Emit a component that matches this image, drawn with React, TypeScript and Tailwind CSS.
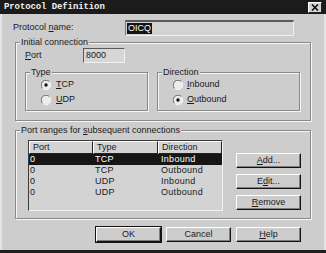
import React from "react";

const Radio = ({ checked }: { checked?: boolean }) => (
  <svg width="10" height="10" viewBox="0 0 10 10" className="shrink-0">
    <circle cx="5" cy="5" r="4.2" fill="#ececec" />
    <path d="M1.6 8.4A4.8 4.8 0 0 1 8.4 1.6" fill="none" stroke="#6f6f6f" />
    <path d="M8.4 1.6A4.8 4.8 0 0 1 1.6 8.4" fill="none" stroke="#fafafa" />
    {checked && <circle cx="5" cy="5" r="1.7" fill="#111" />}
  </svg>
);

const Btn = ({
  children,
  primary,
}: {
  children: React.ReactNode;
  primary?: boolean;
}) => (
  <div
    className={
      primary
        ? "w-[65px] h-[15px] flex items-center justify-center border border-t-white border-l-white border-r-[#141414] border-b-[#141414] shadow-[inset_-1px_-1px_0_#7d7d7d,0_0_0_1px_#141414]"
        : "w-[65px] h-[15px] flex items-center justify-center border border-t-white border-l-white border-r-[#141414] border-b-[#141414] shadow-[inset_-1px_-1px_0_#7d7d7d]"
    }
  >
    {children}
  </div>
);

const Group = ({
  label,
  className,
  children,
}: {
  label: React.ReactNode;
  className: string;
  children: React.ReactNode;
}) => (
  <div
    className={
      "relative border border-[#8a8a8a] shadow-[inset_1px_1px_0_#f6f6f6,1px_1px_0_#f6f6f6] " +
      className
    }
  >
    <span className="absolute -top-[7px] left-[4px] px-[1px] leading-[12px] bg-[#cdcdcd] whitespace-nowrap">
      {label}
    </span>
    {children}
  </div>
);

const rows = [
  { port: "0", type: "TCP", dir: "Inbound" },
  { port: "0", type: "TCP", dir: "Outbound" },
  { port: "0", type: "UDP", dir: "Inbound" },
  { port: "0", type: "UDP", dir: "Outbound" },
];

export default function App() {
  return (
    <div className="w-[326px] h-[253px] bg-[#cdcdcd] flex flex-col font-['Liberation_Sans',Arial,sans-serif] text-[9px] text-[#1a1a1a] overflow-hidden">
      {/* title bar */}
      <div className="h-[14px] bg-[#1b1b1b] flex items-center justify-between pl-[4px] pr-[4px]">
        <span className="font-['Liberation_Mono',monospace] font-bold text-[9px] text-[#f2f2f2] leading-none tracking-[-0.1px]">
          Protocol Definition
        </span>
        <div className="w-[14px] h-[11px] bg-[#d4d4d4] border border-t-white border-l-white border-r-[#222] border-b-[#222] flex items-center justify-center">
          <svg width="8" height="7" viewBox="0 0 8 7">
            <path d="M1 0.5L7 6.5M7 0.5L1 6.5" stroke="#111" strokeWidth="1.6" />
          </svg>
        </div>
      </div>

      <div className="flex-1 flex flex-col shadow-[inset_2px_0_0_#e4e4e4,inset_-2px_0_0_#e4e4e4]">
        {/* protocol name */}
        <div className="mt-[6px] h-[16px] flex items-center">
          <span className="w-[125px] pl-[13px]">
            Protocol <span className="underline">n</span>ame:
          </span>
          <div className="w-[169px] h-[16px] bg-[#d2d2d2] border-t-2 border-l border-t-[#5a5a5a] border-l-[#7a7a7a] border-r border-b border-r-[#f0f0f0] border-b-[#f0f0f0] flex items-center pl-[1px]">
            <span className="bg-[#141414] text-white leading-[11px] px-[1px]">
              OICQ
            </span>
          </div>
        </div>

        {/* initial connection */}
        <Group
          label="Initial connection"
          className="mt-[6px] ml-[15px] w-[296px] h-[79px]"
        >
          <div className="pt-[5px] pl-[9px] h-[20px] flex items-center">
            <span className="w-[58px]">
              <span className="underline">P</span>ort
            </span>
            <div className="w-[42px] h-[15px] bg-[#d6d6d6] border border-t-[#5a5a5a] border-l-[#5a5a5a] border-r-[#f0f0f0] border-b-[#f0f0f0] flex items-center pl-[2px]">
              8000
            </div>
          </div>
          <div className="mt-[9px] ml-[9px] flex gap-[9px]">
            <Group label="Type" className="w-[123px] h-[39px]">
              <div className="pt-[6px] pl-[15px] flex flex-col gap-[3px]">
                <div className="h-[12px] flex items-center gap-[5px]">
                  <Radio checked />
                  <span>
                    <span className="underline">T</span>CP
                  </span>
                </div>
                <div className="h-[12px] flex items-center gap-[5px]">
                  <Radio />
                  <span>
                    <span className="underline">U</span>DP
                  </span>
                </div>
              </div>
            </Group>
            <Group label="Direction" className="w-[143px] h-[39px]">
              <div className="pt-[6px] pl-[15px] flex flex-col gap-[3px]">
                <div className="h-[12px] flex items-center gap-[4px]">
                  <Radio />
                  <span>
                    <span className="underline">I</span>nbound
                  </span>
                </div>
                <div className="h-[12px] flex items-center gap-[4px]">
                  <Radio checked />
                  <span>
                    <span className="underline">O</span>utbound
                  </span>
                </div>
              </div>
            </Group>
          </div>
        </Group>

        {/* port ranges */}
        <Group
          label={
            <>
              Port ranges for <span className="underline">s</span>ubsequent
              connections
            </>
          }
          className="mt-[9px] ml-[15px] w-[296px] h-[89px]"
        >
          <div className="pt-[9px] pl-[12px] flex">
            <div className="w-[195px] h-[71px] bg-[#d3d3d3] border border-t-[#3a3a3a] border-l-[#3a3a3a] border-r-[#f2f2f2] border-b-[#f2f2f2] flex flex-col">
              <div className="h-[13px] flex shrink-0">
                <div className="w-[64px] pl-[3px] flex items-center border border-t-white border-l-white border-r-[#222] border-b-[#222]">
                  Port
                </div>
                <div className="w-[65px] pl-[3px] flex items-center border border-t-white border-l-white border-r-[#222] border-b-[#222]">
                  Type
                </div>
                <div className="w-[64px] pl-[3px] flex items-center border border-t-white border-l-white border-r-[#222] border-b-[#222]">
                  Direction
                </div>
              </div>
              {rows.map((r, i) => (
                <div
                  key={i}
                  className={
                    i === 0
                      ? "h-[11px] flex items-center bg-[#161616] text-white tracking-[0.3px]"
                      : "h-[11px] flex items-center tracking-[0.3px]"
                  }
                >
                  <span className="w-[64px] pl-[1px]">{r.port}</span>
                  <span className="w-[65px] pl-[2px]">{r.type}</span>
                  <span className="pl-[3px]">{r.dir}</span>
                </div>
              ))}
            </div>
            <div className="ml-[13px] mt-[13px] flex flex-col gap-[6px]">
              <Btn>
                <span>
                  <span className="underline">A</span>dd...
                </span>
              </Btn>
              <Btn>
                <span>
                  E<span className="underline">d</span>it...
                </span>
              </Btn>
              <Btn>
                <span>
                  <span className="underline">R</span>emove
                </span>
              </Btn>
            </div>
          </div>
        </Group>

        {/* dialog buttons */}
        <div className="mt-[8px] ml-[96px] flex gap-[5px]">
          <Btn primary>OK</Btn>
          <Btn>Cancel</Btn>
          <Btn>
            <span>
              <span className="underline">H</span>elp
            </span>
          </Btn>
        </div>
      </div>
      <div className="h-[3px] bg-[#1e1e1e] shrink-0" />
    </div>
  );
}
